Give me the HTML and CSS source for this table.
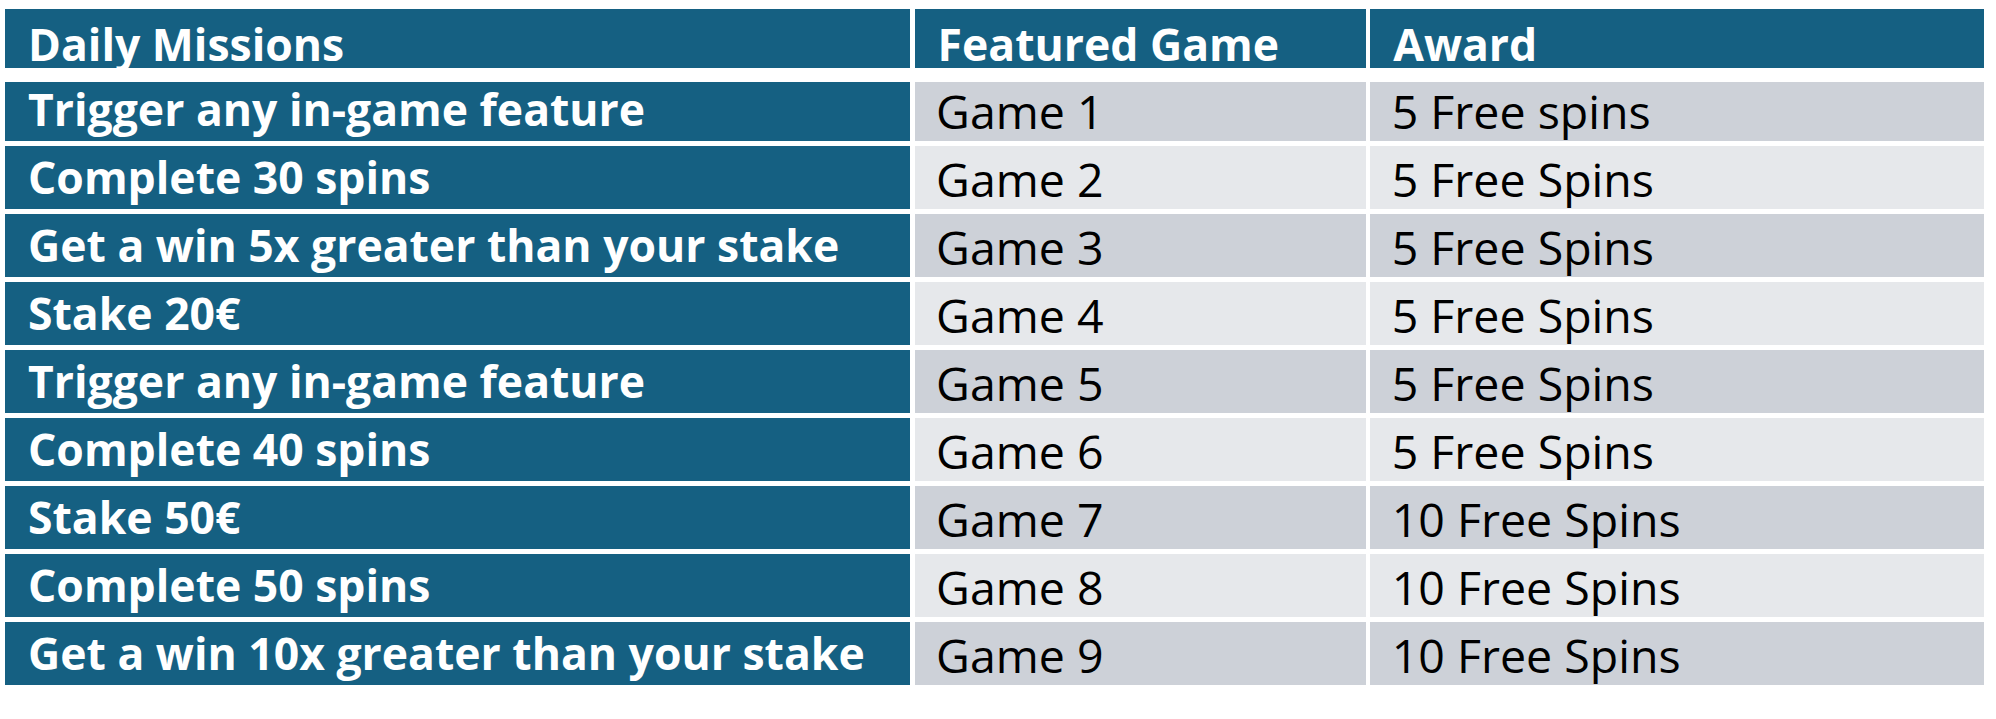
FILE: index.html
```html
<!DOCTYPE html>
<html lang="en">
<head>
<meta charset="utf-8">
<title>Daily Missions</title>
<link rel="stylesheet" href="styles.css">
</head>
<body>
<div class="table">
  <div class="row head">
    <div class="cell blue">Daily Missions</div>
    <div class="cell blue">Featured Game</div>
    <div class="cell blue">Award</div>
  </div>
  <div class="body">
    <div class="row first odd">
      <div class="cell blue">Trigger any in-game feature</div>
      <div class="cell gray">Game 1</div>
      <div class="cell gray">5 Free spins</div>
    </div>
    <div class="row even">
      <div class="cell blue">Complete 30 spins</div>
      <div class="cell gray">Game 2</div>
      <div class="cell gray">5 Free Spins</div>
    </div>
    <div class="row odd">
      <div class="cell blue">Get a win 5x greater than your stake</div>
      <div class="cell gray">Game 3</div>
      <div class="cell gray">5 Free Spins</div>
    </div>
    <div class="row even">
      <div class="cell blue">Stake 20€</div>
      <div class="cell gray">Game 4</div>
      <div class="cell gray">5 Free Spins</div>
    </div>
    <div class="row odd">
      <div class="cell blue">Trigger any in-game feature</div>
      <div class="cell gray">Game 5</div>
      <div class="cell gray">5 Free Spins</div>
    </div>
    <div class="row even">
      <div class="cell blue">Complete 40 spins</div>
      <div class="cell gray">Game 6</div>
      <div class="cell gray">5 Free Spins</div>
    </div>
    <div class="row odd">
      <div class="cell blue">Stake 50€</div>
      <div class="cell gray">Game 7</div>
      <div class="cell gray">10 Free Spins</div>
    </div>
    <div class="row even">
      <div class="cell blue">Complete 50 spins</div>
      <div class="cell gray">Game 8</div>
      <div class="cell gray">10 Free Spins</div>
    </div>
    <div class="row odd">
      <div class="cell blue">Get a win 10x greater than your stake</div>
      <div class="cell gray">Game 9</div>
      <div class="cell gray">10 Free Spins</div>
    </div>
  </div>
</div>
</body>
</html>
```
FILE: styles.css
```css
html, body {
  margin: 0;
  padding: 0;
  background: #ffffff;
}

body {
  font-family: "Open Sans", "Noto Sans", sans-serif;
  padding: 9.3px 0 0 5px;
}

.table {
  display: flex;
  flex-direction: column;
  width: 1979px;
}

.row {
  display: grid;
  grid-template-columns: 905px 451px 614px;
  column-gap: 4.6px;
  height: 63.3px;
}

.row.head {
  height: 59px;
  margin-bottom: 13.4px;
}

.body {
  display: flex;
  flex-direction: column;
  gap: 4.7px;
}

.row.first {
  height: 59.3px;
}

.cell {
  display: flex;
  align-items: flex-end;
  line-height: 1;
  white-space: nowrap;
}

.cell.blue {
  background: #156082;
  color: #ffffff;
  font-weight: 700;
  font-size: 44.5px;
  padding: 0 0 9px 23px;
}

.row.head .cell.blue {
  padding-bottom: 2px;
}

.cell.gray {
  color: #000000;
  font-weight: 400;
  font-size: 46.5px;
  padding: 0 0 6px 21.5px;
}

.row.odd .cell.gray {
  background: #cdd1d8;
}

.row.even .cell.gray {
  background: #e6e8eb;
}
```
